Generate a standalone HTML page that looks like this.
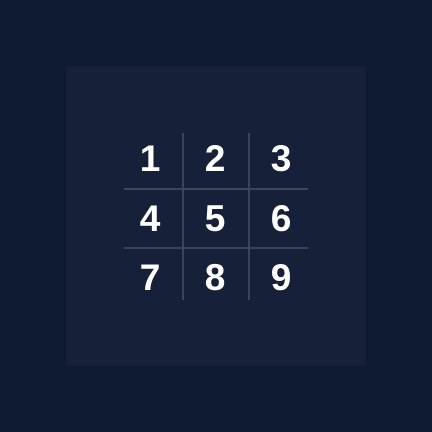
<!DOCTYPE html>
<html><head><style>
html,body{margin:0;padding:0;width:432px;height:432px;background:#0e1932;overflow:hidden}
.p{position:absolute;left:66px;top:66px;width:300px;height:300px;background:#172039}
.l{position:absolute;background:#3b435e}
.d{position:absolute;width:60px;text-align:center;font:bold 37px/1 "Liberation Sans",sans-serif;color:#fff}
</style></head><body>
<div class="p"></div>
<div class="l" style="left:182px;top:133px;width:1.5px;height:167px"></div>
<div class="l" style="left:248px;top:133px;width:1.5px;height:167px"></div>
<div class="l" style="left:124px;top:188px;width:184px;height:1.5px"></div>
<div class="l" style="left:124px;top:247px;width:184px;height:1.5px"></div>
<div class="d" style="left:120px;top:140px">1</div>
<div class="d" style="left:185px;top:140px">2</div>
<div class="d" style="left:251px;top:140px">3</div>
<div class="d" style="left:120px;top:200px">4</div>
<div class="d" style="left:185px;top:200px">5</div>
<div class="d" style="left:251px;top:200px">6</div>
<div class="d" style="left:120px;top:259px">7</div>
<div class="d" style="left:185px;top:259px">8</div>
<div class="d" style="left:251px;top:259px">9</div>
</body></html>
